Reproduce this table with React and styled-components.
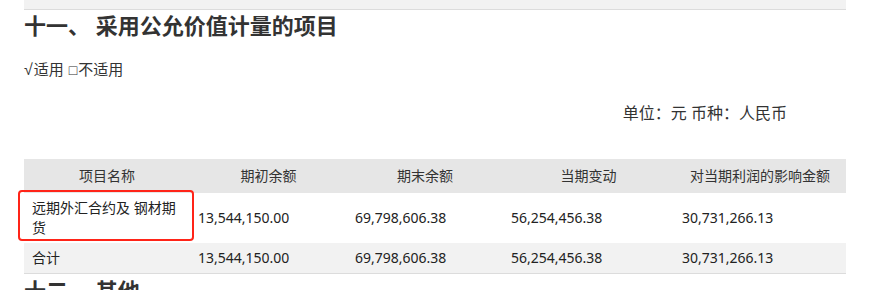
import styled, { createGlobalStyle } from 'styled-components';

const GlobalStyle = createGlobalStyle`
  body {
    margin: 0;
    background: #fff;
    font-family: "Noto Sans", "Noto Sans CJK SC", sans-serif;
    color: #333;
  }
`;

const Page = styled.div`
  width: 822px;
  padding: 0 24px;
`;

const TopBar = styled.div`
  height: 9px;
  background: #f2f2f2;
  border-bottom: 1px solid #dcdcdc;
`;

const Heading = styled.h2`
  margin: ${p => p.$top}px 0 0;
  font-size: 22px;
  line-height: 26px;
  font-weight: 700;
  color: #333;
  white-space: nowrap;
`;

const Applicable = styled.p`
  margin: 21px 0 0;
  font-size: 15px;
  line-height: 20px;
  color: #333;
`;

const Mark = styled.span`
  font-family: "Liberation Sans", "DejaVu Sans", sans-serif;
  font-size: ${p => p.$size}px;
  margin: 0 ${p => p.$gap}px 0 ${p => p.$lead}px;
`;

const Unit = styled.p`
  margin: 22px 0 0;
  padding-right: 59px;
  text-align: right;
  font-size: 16px;
  line-height: 22px;
  color: #333;
`;

const TableWrap = styled.div`
  position: relative;
  margin-top: 35px;
`;

const Table = styled.table`
  width: 822px;
  border-collapse: collapse;
  table-layout: fixed;
  font-size: 14px;
  line-height: 20px;
`;

const HeadCell = styled.th`
  background: #e6e6e6;
  font-weight: 400;
  color: #333;
  padding: 7px 8px;
  text-align: center;
`;

const Row = styled.tr`
  background: ${p => (p.$shade ? '#f2f2f2' : '#fff')};
  border-bottom: ${p => (p.$shade ? '1px solid #dcdcdc' : 'none')};
`;

const Cell = styled.td`
  padding: 5px 8px;
  color: #222;
  vertical-align: middle;
`;

const Highlight = styled.div`
  position: absolute;
  left: -6px;
  top: 31px;
  width: 172px;
  height: 47px;
  border: 2px solid #ff2418;
  border-radius: 4px;
  pointer-events: none;
`;

const widths = [166, 157, 156, 171, 172];
const heads = ['项目名称', '期初余额', '期末余额', '当期变动', '对当期利润的影响金额'];
const rows = [
  ['远期外汇合约及 钢材期货', '13,544,150.00', '69,798,606.38', '56,254,456.38', '30,731,266.13'],
  ['合计', '13,544,150.00', '69,798,606.38', '56,254,456.38', '30,731,266.13'],
];

export default function App() {
  return (
    <>
      <GlobalStyle />
      <Page>
        <TopBar />
        <Heading $top={2}>十一、 采用公允价值计量的项目</Heading>
        <Applicable>
          <Mark $size={16} $gap={1} $lead={0}>√</Mark>适用
          <Mark $size={14} $gap={1} $lead={5}>□</Mark>不适用
        </Applicable>
        <Unit>单位：元 币种：人民币</Unit>
        <TableWrap>
          <Table>
            <colgroup>
              {widths.map((w, i) => (
                <col key={i} style={{ width: w }} />
              ))}
            </colgroup>
            <thead>
              <tr>
                {heads.map(h => (
                  <HeadCell key={h}>{h}</HeadCell>
                ))}
              </tr>
            </thead>
            <tbody>
              {rows.map((r, i) => (
                <Row key={i} $shade={i === 1}>
                  {r.map((c, j) => (
                    <Cell key={j}>{c}</Cell>
                  ))}
                </Row>
              ))}
            </tbody>
          </Table>
          <Highlight />
        </TableWrap>
        <Heading $top={3}>十二、 其他</Heading>
      </Page>
    </>
  );
}
